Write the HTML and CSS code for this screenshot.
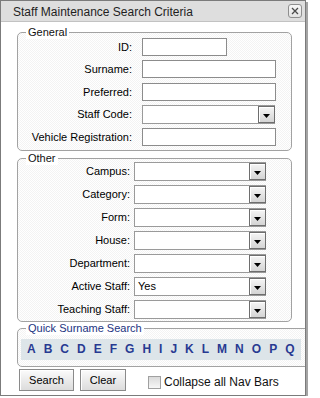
FILE: index.html
```html
<!DOCTYPE html>
<html>
<head>
<meta charset="utf-8">
<title>Staff Maintenance Search Criteria</title>
<link rel="stylesheet" href="styles.css">
</head>
<body>
<div class="window">
  <div class="titlebar">
    <span class="title">Staff Maintenance Search Criteria</span>
    <span class="close"><svg width="8" height="8" viewBox="0 0 8 8"><path d="M1 1L7 7M7 1L1 7" stroke="#4a4a4a" stroke-width="1.3" fill="none"/></svg></span>
  </div>
  <div class="content">
    <div class="group general">
      <span class="legend">General</span>
      <div class="form form-general">
        <label class="lbl">ID:</label>
        <input class="txt short" type="text">
        <label class="lbl">Surname:</label>
        <input class="txt" type="text">
        <label class="lbl">Preferred:</label>
        <input class="txt" type="text">
        <label class="lbl sel-lbl">Staff Code:</label>
        <div class="select wide"><span class="val"></span><span class="arrow"><svg width="7" height="4" viewBox="0 0 7 4"><polygon points="0,0 7,0 3.5,4" fill="#000"/></svg></span></div>
        <label class="lbl">Vehicle Registration:</label>
        <input class="txt" type="text">
      </div>
    </div>

    <div class="group other">
      <span class="legend">Other</span>
      <div class="form form-other">
        <label class="lbl sel-lbl">Campus:</label>
        <div class="select"><span class="val"></span><span class="arrow"><svg width="7" height="4" viewBox="0 0 7 4"><polygon points="0,0 7,0 3.5,4" fill="#000"/></svg></span></div>
        <label class="lbl sel-lbl">Category:</label>
        <div class="select"><span class="val"></span><span class="arrow"><svg width="7" height="4" viewBox="0 0 7 4"><polygon points="0,0 7,0 3.5,4" fill="#000"/></svg></span></div>
        <label class="lbl sel-lbl">Form:</label>
        <div class="select"><span class="val"></span><span class="arrow"><svg width="7" height="4" viewBox="0 0 7 4"><polygon points="0,0 7,0 3.5,4" fill="#000"/></svg></span></div>
        <label class="lbl sel-lbl">House:</label>
        <div class="select"><span class="val"></span><span class="arrow"><svg width="7" height="4" viewBox="0 0 7 4"><polygon points="0,0 7,0 3.5,4" fill="#000"/></svg></span></div>
        <label class="lbl sel-lbl">Department:</label>
        <div class="select"><span class="val"></span><span class="arrow"><svg width="7" height="4" viewBox="0 0 7 4"><polygon points="0,0 7,0 3.5,4" fill="#000"/></svg></span></div>
        <label class="lbl sel-lbl">Active Staff:</label>
        <div class="select"><span class="val">Yes</span><span class="arrow"><svg width="7" height="4" viewBox="0 0 7 4"><polygon points="0,0 7,0 3.5,4" fill="#000"/></svg></span></div>
        <label class="lbl sel-lbl">Teaching Staff:</label>
        <div class="select"><span class="val"></span><span class="arrow"><svg width="7" height="4" viewBox="0 0 7 4"><polygon points="0,0 7,0 3.5,4" fill="#000"/></svg></span></div>
      </div>
    </div>

    <div class="group quick">
      <span class="legend legend-blue">Quick Surname Search</span>
      <div class="alpha">
        <a>A</a><a>B</a><a>C</a><a>D</a><a>E</a><a>F</a><a>G</a><a>H</a><a>I</a><a>J</a><a>K</a><a>L</a><a>M</a><a>N</a><a>O</a><a>P</a><a>Q</a>
      </div>
    </div>

    <div class="actions">
      <button class="btn btn-search" type="button">Search</button>
      <button class="btn btn-clear" type="button">Clear</button>
      <label class="check"><input type="checkbox" class="cb"><span>Collapse all Nav Bars</span></label>
    </div>
  </div>
</div>
</body>
</html>
```

FILE: styles.css
```css
* { box-sizing: border-box; }
html, body { margin: 0; padding: 0; background: #ffffff; }
body {
  font-family: "Liberation Sans", Arial, sans-serif;
  font-size: 11px;
  color: #000;
}

.window {
  width: 306px;
  height: 396px;
  border: 1px solid #7b7b7b;
  box-shadow: 2px 2px 0 #a4a4a4;
  background: #fff;
  overflow: hidden;
}

.titlebar {
  height: 21px;
  background: #dedede;
  border-bottom: 1px solid #c2c2c2;
  display: flex;
  align-items: center;
  justify-content: space-between;
  padding: 0 3px 0 12px;
}
.title { color: #1e1e1e; font-size: 12px; padding-top: 1px; }
.close {
  width: 14px;
  height: 14px;
  border: 1px solid #8e8e8e;
  border-radius: 3px;
  background: linear-gradient(#f7f7f7, #e2e2e2);
  display: flex;
  align-items: center;
  justify-content: center;
}
.close svg { display: block; }

.content { padding: 10px 0 0 16px; }

.group {
  position: relative;
  border: 1px solid #a2a2a2;
  border-radius: 5px;
  background-color: #fff;
  background-image: repeating-conic-gradient(#f3f3f3 0 25%, #ffffff 0 50%);
  background-size: 2px 2px;
}
.legend {
  position: absolute;
  top: -7px;
  left: 8px;
  padding: 0 2px;
  line-height: 13px;
  background: #fff;
  color: #111;
}
.legend-blue { color: #22337f; }

.general { width: 275px; padding: 5px 0 4px; }
.other { width: 275px; margin-top: 7px; padding: 3px 0 2px; }
.quick { width: 300px; margin-top: 6px; padding: 10px 0 6px 3px; border-top-right-radius: 0; border-bottom-right-radius: 0; }

.form { display: grid; align-items: start; }
.form-general {
  grid-template-columns: 114px 1fr;
  column-gap: 10px;
  grid-template-rows: 22px 23px 22px 23px 18px;
}
.form-other {
  grid-template-columns: 112px 1fr;
  column-gap: 4px;
  grid-auto-rows: 23px;
  grid-template-rows: repeat(6, 23px) 19px;
}

.lbl { text-align: right; line-height: 18px; white-space: nowrap; }
.sel-lbl { line-height: 19px; }

.txt {
  -webkit-appearance: none;
  appearance: none;
  width: 134px;
  height: 18px;
  margin: 0;
  padding: 0 3px;
  border: 1px solid #8c8c8c;
  border-radius: 0;
  background: #fff;
  font: 11px "Liberation Sans", Arial, sans-serif;
}
.txt.short { width: 85px; }

.select {
  display: flex;
  width: 132px;
  height: 19px;
  border: 1px solid #9a9a9a;
  border-right: none;
  background: #fff;
}
.select.wide { width: 133px; }
.select .val { flex: 1; padding-left: 3px; line-height: 17px; font-size: 11px; }
.select .arrow {
  width: 17px;
  height: 17px;
  border: 1px solid #6e6e6e;
  background: linear-gradient(#f5f5f5, #d4d4d4);
  box-shadow: inset 1px 1px 0 #ffffff;
  display: flex;
  align-items: center;
  justify-content: center;
  padding-top: 2px;
}
.select .arrow svg { display: block; }

.alpha {
  width: 280px;
  height: 21px;
  background: #dde5e9;
  display: flex;
  gap: 8px;
  padding-left: 6px;
  line-height: 21px;
  font-size: 12px;
  font-weight: bold;
}
.alpha a { color: #283a92; text-decoration: none; cursor: pointer; }

.actions {
  display: flex;
  align-items: flex-start;
  margin-top: 2px;
  padding-left: 2px;
}
.btn {
  height: 22px;
  margin: 0;
  padding: 0;
  border: 1px solid #8a8a8a;
  border-radius: 0;
  background: linear-gradient(#fbfbfb, #dcdcdc);
  box-shadow: inset 1px 1px 0 #ffffff;
  font: 11px "Liberation Sans", Arial, sans-serif;
  color: #000;
}
.btn-search { width: 55px; margin-right: 6px; }
.btn-clear { width: 46px; margin-right: 22px; }

.check {
  display: flex;
  align-items: center;
  margin-top: 6px;
  font-size: 12px;
  line-height: 14px;
  color: #111;
}
.cb {
  -webkit-appearance: none;
  appearance: none;
  width: 13px;
  height: 13px;
  margin: 0 3px 0 0;
  border: 1px solid #a0a0a0;
  background: linear-gradient(#dadada, #f7f7f7);
}
```
